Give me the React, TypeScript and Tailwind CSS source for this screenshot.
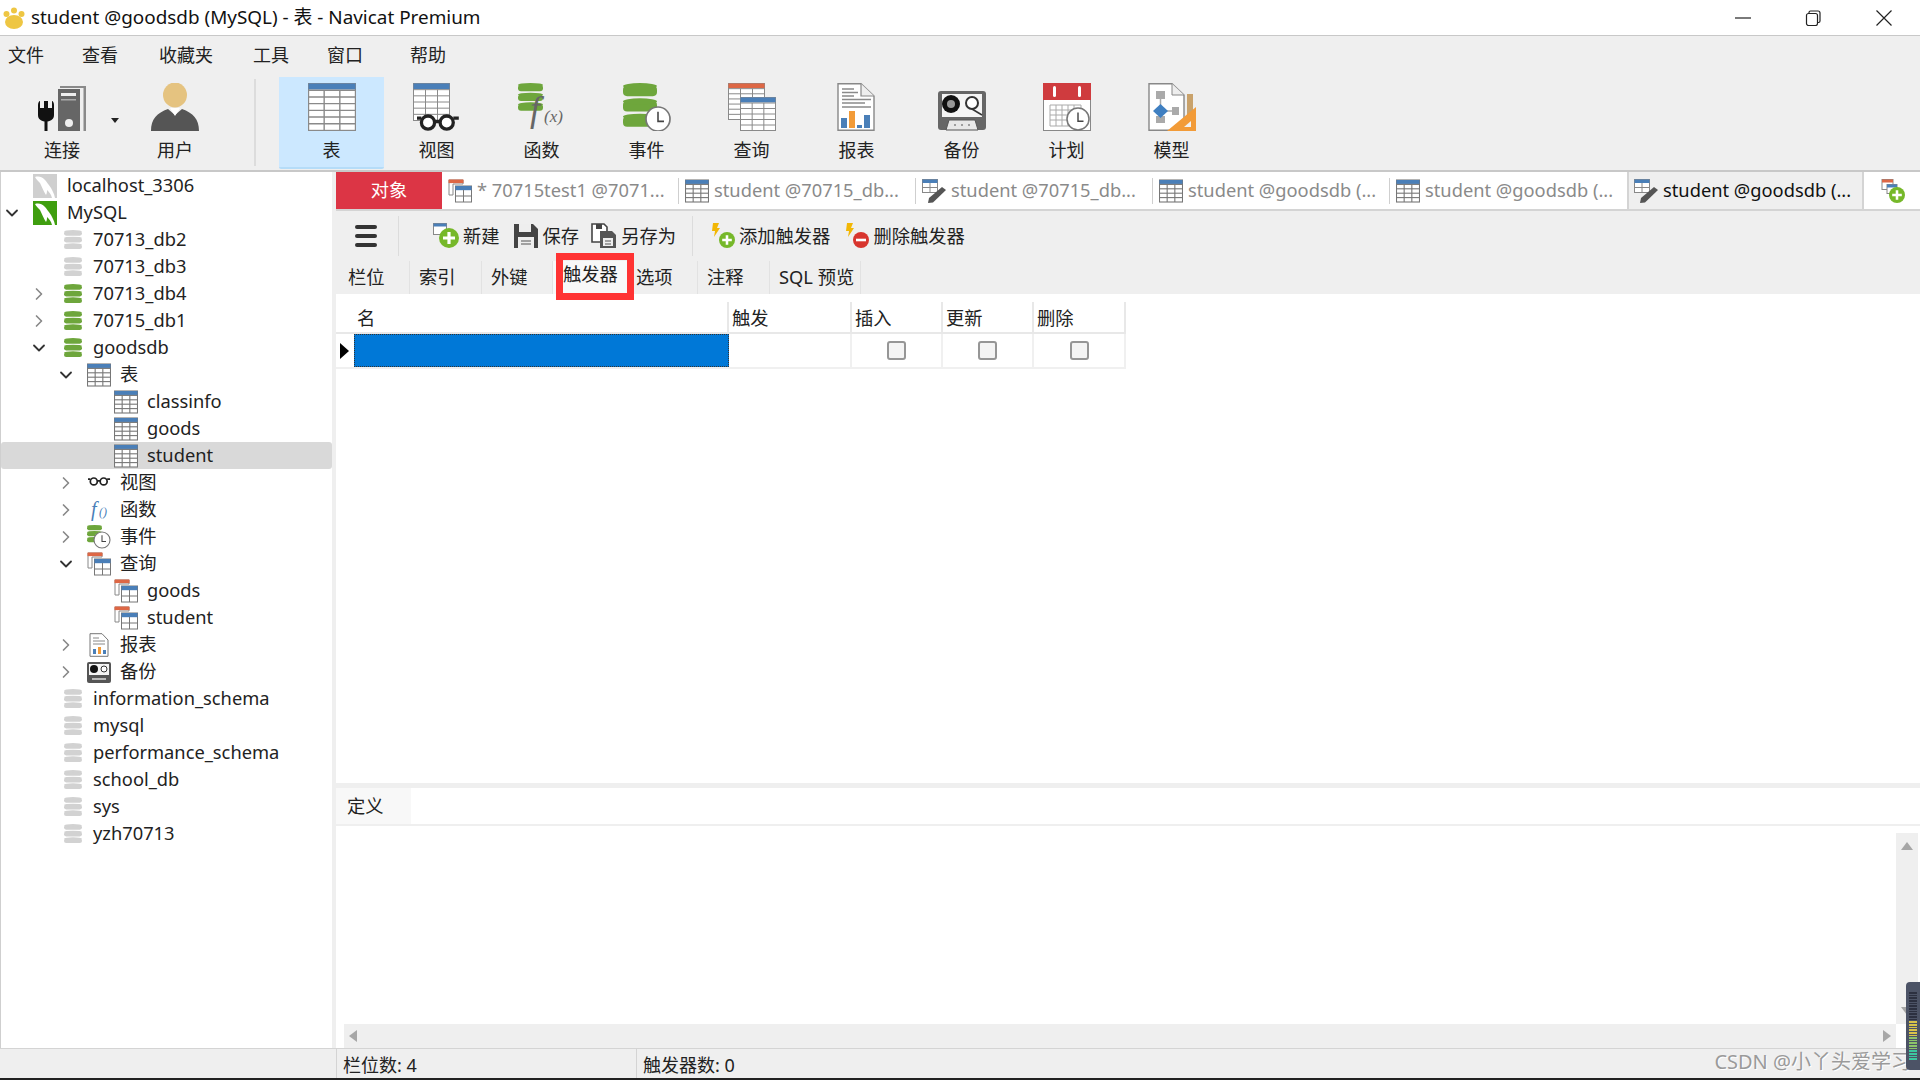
import { ChevronDown, ChevronRight } from "lucide-react";
import type { ReactNode } from "react";

// small drawing helpers ------------------------------------------------------
type GridProps = { x: number; y: number; w: number; h: number; cols: number; rows: number; head?: string; line?: string; sw?: number };

function Grid({ x, y, w, h, cols, rows, head = "#4a7fb8", line = "#8a8a8a", sw = 1 }: GridProps) {
  const rowH = h / (rows + 1);
  const colW = w / cols;
  return (
    <g>
      <rect x={x} y={y} width={w} height={h} fill="#fff" stroke={line} strokeWidth={sw} />
      <rect x={x} y={y} width={w} height={rowH * 0.9} fill={head} />
      {Array.from({ length: rows }).map((_, i) => (
        <line key={i} x1={x} x2={x + w} y1={y + rowH * (i + 1)} y2={y + rowH * (i + 1)} stroke={line} strokeWidth={sw} />
      ))}
      {Array.from({ length: cols - 1 }).map((_, i) => (
        <line key={i} x1={x + colW * (i + 1)} x2={x + colW * (i + 1)} y1={y + rowH} y2={y + h} stroke={line} strokeWidth={sw} />
      ))}
    </g>
  );
}

function DbStack({ x, y, w, h, color }: { x: number; y: number; w: number; h: number; color: string }) {
  const layer = h / 3;
  return (
    <g>
      {[0, 1, 2].map((i) => (
        <g key={i}>
          <rect x={x} y={y + i * layer + layer * 0.18} width={w} height={layer * 0.68} rx={w * 0.12} fill={color} />
          <ellipse cx={x + w / 2} cy={y + i * layer + layer * 0.2} rx={w / 2} ry={layer * 0.2} fill={color} />
        </g>
      ))}
    </g>
  );
}

function Clock({ cx, cy, r }: { cx: number; cy: number; r: number }) {
  return (
    <g>
      <circle cx={cx} cy={cy} r={r} fill="#fff" stroke="#777" strokeWidth={r * 0.14} />
      <path d={`M${cx} ${cy - r * 0.6}V${cy + r * 0.2}H${cx + r * 0.5}`} fill="none" stroke="#444" strokeWidth={r * 0.13} />
    </g>
  );
}

function Glasses({ x, y, s }: { x: number; y: number; s: number }) {
  return (
    <g fill="none" stroke="#222" strokeWidth={3 * s}>
      <circle cx={x + 10 * s} cy={y + 6 * s} r={6 * s} fill="#fff" />
      <circle cx={x + 27 * s} cy={y + 6 * s} r={6 * s} fill="#fff" />
      <path d={`M${x} ${y + 2 * s}H${x + 4 * s}M${x + 16 * s} ${y + 5 * s}H${x + 21 * s}M${x + 33 * s} ${y + 2 * s}H${x + 38 * s}`} />
    </g>
  );
}

function Svg({ size, box = 48, children, className = "" }: { size: number; box?: number; children: ReactNode; className?: string }) {
  return (
    <svg width={size} height={size} viewBox={`0 0 ${box} ${box}`} className={`shrink-0 ${className}`}>
      {children}
    </svg>
  );
}

// toolbar icons (48px) -------------------------------------------------------
const ConnectIcon = (
  <Svg size={48}>
    <path d="M22 3H48V48H45.5V5H22Z" fill="#8a8a8a" />
    <rect x="20" y="6" width="22" height="42" fill="#666" />
    <rect x="23" y="10" width="15" height="3" fill="#eee" />
    <rect x="23" y="16" width="15" height="1.5" fill="#aaa" />
    <circle cx="31" cy="40" r="4" fill="#eee" />
    <path d="M0 22C0 20 1 18 2 18V25H6V18H10V25H14V18C15 18 16 20 16 22V32C16 36 13 38 9.5 38.5V48H6.5V38.5C3 38 0 36 0 32Z" fill="#111" />
  </Svg>
);
const UserIcon = (
  <Svg size={48}>
    <ellipse cx="24" cy="12" rx="12" ry="12.5" fill="#e5c380" />
    <path d="M0 48C0 36 6 30 17 26L24 32L31 26C42 30 48 36 48 48Z" fill="#555" />
    <path d="M19 25H29L24 33Z" fill="#fff" />
  </Svg>
);
const TableBig = (
  <Svg size={48}>
    <Grid x={0.5} y={0.5} w={47} h={47} cols={3} rows={6} sw={1.4} />
  </Svg>
);
const ViewBig = (
  <Svg size={48}>
    <Grid x={0.5} y={0.5} w={36} h={37} cols={3} rows={5} />
    <Glasses x={4} y={33} s={1.1} />
  </Svg>
);
const FuncBig = (
  <Svg size={48}>
    <DbStack x={0} y={0} w={25} h={29} color="#6ea63c" />
    <text x="12" y="38" fontFamily="Liberation Serif" fontStyle="italic" fontSize="36" fill="#666">f</text>
    <text x="26" y="39" fontFamily="Liberation Serif" fontStyle="italic" fontSize="17" fill="#666">(x)</text>
  </Svg>
);
const EventBig = (
  <Svg size={48}>
    <DbStack x={0} y={0} w={34} h={46} color="#6ea63c" />
    <Clock cx={35} cy={36} r={12} />
  </Svg>
);
const QueryBig = (
  <Svg size={48}>
    <Grid x={0.5} y={0.5} w={36} h={36} cols={3} rows={6} head="#dd6745" />
    <Grid x={12.5} y={14.5} w={35} h={33} cols={3} rows={5} />
  </Svg>
);
const ReportBig = (
  <Svg size={48}>
    <path d="M5 .7H28L41 13V47.3H5Z" fill="#fff" stroke="#888" strokeWidth="1.4" />
    <path d="M28 .7V13H41" fill="#eee" stroke="#888" strokeWidth="1.2" />
    <path d="M9 6H21M9 9.5H25M9 13H21M9 16.5H38M9 20H32M9 24H38" stroke="#8a8a8a" strokeWidth="1.3" />
    <rect x="8" y="35" width="6" height="10" fill="#4a7fb8" />
    <rect x="16" y="28" width="6" height="17" fill="#f29b38" />
    <rect x="24" y="42" width="5" height="3" fill="#4a7fb8" />
    <rect x="31" y="32" width="6" height="13" fill="#4a7fb8" />
  </Svg>
);
const BackupBig = (
  <Svg size={48}>
    <rect x="0" y="8" width="48" height="39" rx="3" fill="#666" />
    <rect x="4" y="11" width="40" height="23" fill="#f4f4f4" />
    <circle cx="13" cy="21" r="9" fill="#111" />
    <circle cx="13" cy="21" r="4" fill="#999" />
    <circle cx="34" cy="20" r="6" fill="#fff" stroke="#333" strokeWidth="2" />
    <path d="M34 26L44 32" stroke="#333" strokeWidth="1.5" />
    <path d="M8 47L11 37H37L40 47Z" fill="#e8e8e8" stroke="#555" />
    <path d="M16 42H18M23 42H25M30 42H32" stroke="#555" />
  </Svg>
);
const PlanBig = (
  <Svg size={48}>
    <rect x="0.5" y="0.5" width="47" height="47" fill="#fff" stroke="#888" />
    <rect x="0" y="0" width="48" height="17" fill="#cf3b3e" />
    <rect x="10" y="3" width="3" height="11" fill="#fff" rx="1.5" />
    <rect x="35" y="3" width="3" height="11" fill="#fff" rx="1.5" />
    <path d="M7 22H38V43H7ZM7 27H38M7 32H38M7 37H38M13 22V43M19 22V43M25 22V43M31 22V43" fill="none" stroke="#aaa" />
    <Clock cx={35} cy={36} r={11} />
  </Svg>
);
const ModelBig = (
  <Svg size={48}>
    <path d="M1 .7H24L36 12V47.3H1Z" fill="#fff" stroke="#888" strokeWidth="1.4" />
    <path d="M24 .7V12H36" fill="#eee" stroke="#888" />
    <rect x="8" y="8" width="9" height="8" fill="#aaa" />
    <rect x="8" y="33" width="9" height="7" fill="#aaa" />
    <rect x="24" y="24" width="7" height="8" fill="#aaa" />
    <path d="M12.5 16V33M17 28H24" stroke="#aaa" strokeWidth="1.5" />
    <path d="M12.5 21L20 28L12.5 35L5 28Z" fill="#3f7fc1" />
    <rect x="39" y="11" width="6" height="26" fill="#c9a26b" />
    <path d="M48 24V48H19Z" fill="#f29b38" />
    <path d="M43 38V44H36Z" fill="#f1f1f1" />
  </Svg>
);

// tree and tab icons (24px) --------------------------------------------------
const TableSmall = (
  <Svg size={24} box={24}>
    <Grid x={0.5} y={1} w={23} h={22} cols={3} rows={4} sw={1.1} line="#777" />
  </Svg>
);
const QuerySmall = (
  <Svg size={24} box={24}>
    <path d="M1 1H15V5H5V16H1Z" fill="#fff" stroke="#888" />
    <rect x="0.5" y="0.5" width="15" height="3.6" fill="#dd6745" />
    <rect x="7.5" y="7" width="16" height="16" fill="#fff" stroke="#777" />
    <rect x="7.5" y="7" width="16" height="4.2" fill="#4a7fb8" />
    <path d="M7.5 17H23.5M15.5 11V23" stroke="#777" />
  </Svg>
);
const DesignSmall = (
  <Svg size={24} box={24}>
    <rect x="0.5" y="0.5" width="15" height="13" fill="#fff" stroke="#888" />
    <rect x="0.5" y="0.5" width="15" height="3.5" fill="#4a7fb8" />
    <path d="M0.5 8.5H15.5M8 4V13.5" stroke="#888" />
    <path d="M20 8L24 11L11 23.5L6 24L7 19Z" fill="#555" />
  </Svg>
);
const DbIcon = ({ on = false }: { on?: boolean }) => (
  <Svg size={20} box={20}>
    <DbStack x={1} y={0} w={18} h={20} color={on ? "#6ea63c" : "#d2d2d2"} />
  </Svg>
);
const Dolphin = ({ bg }: { bg: string }) => (
  <Svg size={24} box={24}>
    <rect width="24" height="24" fill={bg} />
    <path d="M2 3C6 2 9 3 11 5C14 8 15 10 18 14C19 16 21 19 22 24H19C18 20 16 18 14 16C14 18 14 19 13 21C11 18 9 13 7 9C5 7 3 5 2 3Z" fill="#fff" />
  </Svg>
);
const ViewSmall = (
  <Svg size={24} box={24}>
    <Glasses x={1} y={7} s={0.58} />
  </Svg>
);
const FuncSmall = (
  <Svg size={24} box={24}>
    <text x="4" y="18" fontFamily="Liberation Serif" fontStyle="italic" fontSize="20" fill="#4a7fb8">f</text>
    <text x="12" y="18" fontFamily="Liberation Serif" fontStyle="italic" fontSize="12" fill="#4a7fb8">()</text>
  </Svg>
);
const EventSmall = (
  <Svg size={24} box={24}>
    <DbStack x={0} y={0} w={15} h={18} color="#6ea63c" />
    <Clock cx={15} cy={15} r={8} />
  </Svg>
);
const ReportSmall = (
  <Svg size={24} box={24}>
    <path d="M3 .7H15L21 7V23.3H3Z" fill="#fff" stroke="#777" />
    <path d="M6 5H12M6 8H18M6 11H18" stroke="#888" />
    <rect x="6" y="16" width="3" height="5" fill="#4a7fb8" />
    <rect x="11" y="14" width="3" height="7" fill="#f29b38" />
    <rect x="16" y="17" width="3" height="4" fill="#4a7fb8" />
  </Svg>
);
const BackupSmall = (
  <Svg size={24} box={24}>
    <rect x="0" y="2" width="24" height="21" rx="2" fill="#555" />
    <rect x="2" y="4" width="20" height="11" fill="#f4f4f4" />
    <circle cx="7" cy="9" r="4" fill="#111" />
    <circle cx="17" cy="9" r="3" fill="#fff" stroke="#333" />
    <path d="M5 19H19" stroke="#ddd" strokeWidth="1.5" />
  </Svg>
);

const GreenPlus = ({ cx, cy, r }: { cx: number; cy: number; r: number }) => (
  <g>
    <circle cx={cx} cy={cy} r={r} fill="#76b82a" />
    <path d={`M${cx - r * 0.6} ${cy}H${cx + r * 0.6}M${cx} ${cy - r * 0.6}V${cy + r * 0.6}`} stroke="#fff" strokeWidth={r * 0.32} />
  </g>
);
const Bolt = (
  <path d="M3 0H9L7 5H10L4 14L5 8H2Z" fill="#f2b705" />
);

const NewIcon = (
  <Svg size={26} box={26}>
    <rect x="0.5" y="0.5" width="13" height="11" fill="#fff" stroke="#888" />
    <rect x="0.5" y="0.5" width="13" height="3" fill="#4a7fb8" />
    <GreenPlus cx={16} cy={15} r={10} />
  </Svg>
);
const SaveIcon = (
  <Svg size={26} box={26}>
    <path d="M1 1H20L25 6V25H1Z" fill="#444" />
    <rect x="6" y="1" width="12" height="8" fill="#eee" />
    <rect x="5" y="14" width="16" height="11" fill="#eee" />
    <path d="M8 18H18M8 21H18" stroke="#555" />
  </Svg>
);
const SaveAsIcon = (
  <Svg size={26} box={26}>
    <path d="M1 1H13L16 4V19H1Z" fill="#fff" stroke="#444" strokeWidth="1.6" />
    <rect x="5" y="1" width="6" height="5" fill="#444" />
    <path d="M9 8H21L25 12V25H9Z" fill="#555" />
    <rect x="12" y="15" width="10" height="8" fill="#eee" />
    <path d="M14 18H20M14 21H20" stroke="#555" />
  </Svg>
);
const AddTriggerIcon = (
  <Svg size={26} box={26}>
    {Bolt}
    <GreenPlus cx={17} cy={17} r={8} />
  </Svg>
);
const DelTriggerIcon = (
  <Svg size={26} box={26}>
    {Bolt}
    <circle cx="17" cy="17" r="8" fill="#d8352e" />
    <path d="M12 17H22" stroke="#fff" strokeWidth="2.6" />
  </Svg>
);
const AddTabIcon = (
  <Svg size={24} box={24}>
    <rect x="1" y="0.5" width="11" height="10" fill="#fff" stroke="#888" />
    <rect x="1" y="0.5" width="11" height="3" fill="#dd6745" />
    <rect x="6" y="5.5" width="10" height="9" fill="#fff" stroke="#888" />
    <rect x="6" y="5.5" width="10" height="3" fill="#4a7fb8" />
    <GreenPlus cx={16} cy={16} r={8} />
  </Svg>
);

// data -----------------------------------------------------------------------
const menus = [
  { text: "文件", cls: "ml-[8px]" },
  { text: "查看", cls: "ml-[38px]" },
  { text: "收藏夹", cls: "ml-[41px]" },
  { text: "工具", cls: "ml-[40px]" },
  { text: "窗口", cls: "ml-[38px]" },
  { text: "帮助", cls: "ml-[47px]" },
];

const tools = [
  { label: "表", icon: TableBig, active: true },
  { label: "视图", icon: ViewBig },
  { label: "函数", icon: FuncBig },
  { label: "事件", icon: EventBig },
  { label: "查询", icon: QueryBig },
  { label: "报表", icon: ReportBig },
  { label: "备份", icon: BackupBig },
  { label: "计划", icon: PlanBig },
  { label: "模型", icon: ModelBig },
];

const docTabs = [
  { text: "* 70715test1 @7071...", icon: QuerySmall },
  { text: "student @70715_db...", icon: TableSmall },
  { text: "student @70715_db...", icon: DesignSmall },
  { text: "student @goodsdb (...", icon: TableSmall },
  { text: "student @goodsdb (...", icon: TableSmall },
];

type Row = { text: string; level: number; icon: ReactNode; open?: boolean; closed?: boolean; selected?: boolean };

const tree: Row[] = [
  { text: "localhost_3306", level: 0, icon: <Dolphin bg="#cfcfcf" /> },
  { text: "MySQL", level: 0, icon: <Dolphin bg="#3f9e0f" />, open: true },
  { text: "70713_db2", level: 1, icon: <DbIcon /> },
  { text: "70713_db3", level: 1, icon: <DbIcon /> },
  { text: "70713_db4", level: 1, icon: <DbIcon on />, closed: true },
  { text: "70715_db1", level: 1, icon: <DbIcon on />, closed: true },
  { text: "goodsdb", level: 1, icon: <DbIcon on />, open: true },
  { text: "表", level: 2, icon: TableSmall, open: true },
  { text: "classinfo", level: 3, icon: TableSmall },
  { text: "goods", level: 3, icon: TableSmall },
  { text: "student", level: 3, icon: TableSmall, selected: true },
  { text: "视图", level: 2, icon: ViewSmall, closed: true },
  { text: "函数", level: 2, icon: FuncSmall, closed: true },
  { text: "事件", level: 2, icon: EventSmall, closed: true },
  { text: "查询", level: 2, icon: QuerySmall, open: true },
  { text: "goods", level: 3, icon: QuerySmall },
  { text: "student", level: 3, icon: QuerySmall },
  { text: "报表", level: 2, icon: ReportSmall, closed: true },
  { text: "备份", level: 2, icon: BackupSmall, closed: true },
  { text: "information_schema", level: 1, icon: <DbIcon /> },
  { text: "mysql", level: 1, icon: <DbIcon /> },
  { text: "performance_schema", level: 1, icon: <DbIcon /> },
  { text: "school_db", level: 1, icon: <DbIcon /> },
  { text: "sys", level: 1, icon: <DbIcon /> },
  { text: "yzh70713", level: 1, icon: <DbIcon /> },
];

const levelPad = ["pl-0", "pl-[27px]", "pl-[54px]", "pl-[81px]"];
const iconBoxes = ["w-[44px] pl-[10px]", "w-[43px] pl-[13px]", "w-[43px] pl-[10px]", "w-[43px] pl-[10px]"];

const subTabs = [
  { text: "栏位", cls: "w-[71px]" },
  { text: "索引", cls: "w-[72px]" },
  { text: "外键", cls: "w-[71px]" },
  { text: "触发器", cls: "w-[74px]", active: true },
  { text: "选项", cls: "w-[71px]" },
  { text: "注释", cls: "w-[72px]" },
  { text: "SQL 预览", cls: "w-[91px]" },
];

function TreeRow({ row }: { row: Row }) {
  return (
    <div className={`flex h-[27px] items-center rounded-[3px] ${levelPad[row.level]} ${row.selected ? "bg-[#d9d9d9]" : ""}`}>
      <span className="flex w-[22px] shrink-0 items-center justify-center">
        {row.open && <ChevronDown size={20} strokeWidth={2.2} className="text-[#333]" />}
        {row.closed && <ChevronRight size={20} strokeWidth={2} className="text-[#888]" />}
      </span>
      <span className={`flex shrink-0 items-center ${iconBoxes[row.level]}`}>{row.icon}</span>
      <span className="whitespace-nowrap">{row.text}</span>
    </div>
  );
}

function Check() {
  return (
    <div className="flex h-full items-center justify-center border-r-2 border-[#f0f0f0]">
      <span className="h-[19px] w-[19px] rounded-[3px] border-2 border-[#969696] bg-[#f4f4f4]" />
    </div>
  );
}

function HeadCell({ text }: { text: string }) {
  return <div className="flex h-full items-center border-r-2 border-[#e8e8e8] pl-[3px] pt-[2px]">{text}</div>;
}

export default function App() {
  return (
    <div className="relative flex h-[1080px] w-[1920px] flex-col overflow-hidden bg-[#efefef] font-['Noto_Sans','Noto_Sans_CJK_SC',sans-serif] text-[18.3px] leading-none text-[#222]">
      {/* title bar */}
      <div className="flex h-[36px] shrink-0 items-center border-b border-[#c8c8c8] bg-white pl-[3px]">
        <Svg size={22} box={22}>
          <ellipse cx="11" cy="15" rx="9" ry="7" fill="#eec643" />
          <circle cx="3.5" cy="7" r="3" fill="#eec643" />
          <circle cx="11" cy="3.5" r="3" fill="#eec643" />
          <circle cx="18.5" cy="7" r="3" fill="#eec643" />
        </Svg>
        <span className="ml-[6px] text-[18.9px] text-[#111]">student @goodsdb (MySQL) - 表 - Navicat Premium</span>
        <div className="ml-auto flex items-center">
          <svg width="16" height="16" viewBox="0 0 16 16"><path d="M0 8H16" stroke="#222" strokeWidth="1.2" /></svg>
          <svg width="16" height="16" viewBox="0 0 16 16" className="ml-[54px]"><path d="M4 3V2.5Q4 1 5.5 1H13Q15 1 15 3V11Q15 12.5 13.5 12.5H13" fill="none" stroke="#222" strokeWidth="1.2" /><rect x="1.5" y="3.5" width="11" height="12" rx="2" fill="none" stroke="#222" strokeWidth="1.2" /></svg>
          <svg width="16" height="16" viewBox="0 0 16 16" className="ml-[55px] mr-[28px]"><path d="M.5.5L15.5 15.5M15.5.5L.5 15.5" stroke="#222" strokeWidth="1.2" /></svg>
        </div>
      </div>

      {/* menu */}
      <div className="flex h-[36px] shrink-0 items-center pt-[2px] text-[18px]">
        {menus.map((m) => (
          <span key={m.text} className={m.cls}>{m.text}</span>
        ))}
      </div>

      {/* main toolbar */}
      <div className="flex h-[100px] shrink-0 border-b-2 border-[#c8c8c8] pb-[1px] pt-[5px] text-[18px]">
        <div className="relative flex w-[124px] flex-col items-center pt-[6px]">
          {ConnectIcon}
          <span className="mt-[10px]">连接</span>
          <span className="absolute left-[111px] top-[41px] h-0 w-0 border-x-[4px] border-t-[5px] border-x-transparent border-t-[#222]" />
        </div>
        <div className="flex w-[102px] flex-col items-center pt-[6px]">
          {UserIcon}
          <span className="mt-[10px]">用户</span>
        </div>
        <div className="ml-[28px] mr-[23px] mt-[2px] h-[87px] w-[2px] bg-[#dcdcdc]" />
        {tools.map((t) => (
          <div
            key={t.label}
            className={`flex w-[105px] flex-col items-center pt-[6px] ${t.active ? "rounded-b-[2px] border-b-2 border-[#b5dcf8] bg-[#cce8ff]" : ""}`}
          >
            {t.icon}
            <span className="mt-[10px]">{t.label}</span>
          </div>
        ))}
      </div>

      {/* body */}
      <div className="flex min-h-0 flex-1">
        {/* tree */}
        <div className="w-[332px] shrink-0 border-l border-[#cfcfcf] bg-white">
          {tree.map((row, i) => (
            <TreeRow key={i} row={row} />
          ))}
        </div>

        {/* right side */}
        <div className="ml-[4px] flex min-w-0 flex-1 flex-col">
          {/* document tabs */}
          <div className="flex h-[39px] shrink-0 border-b-2 border-[#d4d4d4] bg-white">
            <div className="flex w-[106px] items-center justify-center bg-[#dc3545] text-white">对象</div>
            {docTabs.map((t, i) => (
              <div key={i} className="flex w-[237px] items-center pl-[6px] text-[#8a8a8a]">
                {t.icon}
                <span className="ml-[5px] whitespace-nowrap">{t.text}</span>
                <span className={`ml-auto h-[26px] w-px ${i < 4 ? "bg-[#cfcfcf]" : ""}`} />
              </div>
            ))}
            <div className="flex w-[237px] items-center border-x-2 border-[#d4d4d4] bg-[#efefef] pl-[5px] text-[#111]">
              {DesignSmall}
              <span className="ml-[5px] whitespace-nowrap">student @goodsdb (...</span>
            </div>
            <div className="ml-[2px] flex flex-1 items-center pl-[15px]">{AddTabIcon}</div>
          </div>

          {/* object toolbar */}
          <div className="flex h-[50px] shrink-0 items-center">
            <div className="ml-[19px] flex w-[22px] flex-col gap-[5px]">
              <span className="h-[4px] rounded-[2px] bg-[#333]" />
              <span className="h-[4px] rounded-[2px] bg-[#333]" />
              <span className="h-[4px] rounded-[2px] bg-[#333]" />
            </div>
            <span className="ml-[21px] h-[40px] w-px bg-[#dcdcdc]" />
            <span className="ml-[34px] flex items-center gap-[4px]">{NewIcon}新建</span>
            <span className="ml-[13px] flex items-center gap-[4px]">{SaveIcon}保存</span>
            <span className="ml-[12px] flex items-center gap-[4px]">{SaveAsIcon}另存为</span>
            <span className="ml-[16px] h-[40px] w-px bg-[#dcdcdc]" />
            <span className="ml-[17px] flex items-center gap-[3px]">{AddTriggerIcon}添加触发器</span>
            <span className="ml-[14px] flex items-center gap-[3px]">{DelTriggerIcon}删除触发器</span>
          </div>

          {/* object tabs */}
          <div className="flex h-[33px] shrink-0 pl-[3px]">
            {subTabs.map((t) =>
              t.active ? (
                <div key={t.text} className={`relative flex items-center bg-[#f8f8f8] pb-[6px] pl-[10px] ${t.cls}`}>
                  {t.text}
                  <span className="absolute -top-[8px] bottom-[-6px] left-[3px] right-[-7px] border-[7px] border-[#ff3333]" />
                </div>
              ) : (
                <div key={t.text} className={`flex items-center border-r border-[#e2e2e2] pl-[9px] ${t.cls}`}>
                  {t.text}
                </div>
              ),
            )}
          </div>

          {/* trigger grid */}
          <div className="min-h-0 flex-1 bg-white pt-[8px]">
            <div className="grid w-[790px] grid-cols-[18px_375px_123px_91px_91px_92px] grid-rows-[32px_33px]">
              <div className="border-b-2 border-[#e8e8e8]" />
              {["名", "触发", "插入", "更新", "删除"].map((h) => (
                <div key={h} className="border-b-2 border-[#e8e8e8]">
                  <HeadCell text={h} />
                </div>
              ))}
              <div className="flex items-center pl-[4px]">
                <span className="h-0 w-0 border-y-[8px] border-l-[9px] border-y-transparent border-l-black" />
              </div>
              <div className="border border-dotted border-[#333] bg-[#0078d7]" />
              <div className="border-r-2 border-[#f0f0f0]" />
              <Check />
              <Check />
              <Check />
              <div className="col-span-6 h-[2px] bg-[#f0f0f0]" />
            </div>
          </div>

          {/* definition panel */}
          <div className="h-[5px] shrink-0 bg-[#efefef]" />
          <div className="flex h-[38px] shrink-0 border-b-2 border-[#efefef] bg-white">
            <div className="flex w-[75px] items-center bg-[#f8f8f8] pl-[11px]">定义</div>
          </div>
          <div className="flex h-[222px] shrink-0 flex-col bg-white">
            <div className="flex min-h-0 flex-1">
              <div className="flex-1" />
              <div className="mr-[2px] mt-[7px] flex w-[22px] flex-col items-center justify-between bg-[#efefef] py-[9px]">
                <span className="h-0 w-0 border-x-[6px] border-b-[8px] border-x-transparent border-b-[#a6a6a6]" />
                <span className="h-0 w-0 border-x-[6px] border-t-[8px] border-x-transparent border-t-[#a6a6a6]" />
              </div>
            </div>
            <div className="ml-[8px] mr-[24px] flex h-[24px] shrink-0 items-center justify-between bg-[#efefef] px-[5px]">
              <span className="h-0 w-0 border-y-[6px] border-r-[8px] border-y-transparent border-r-[#a6a6a6]" />
              <span className="h-0 w-0 border-y-[6px] border-l-[8px] border-y-transparent border-l-[#a6a6a6]" />
            </div>
          </div>
        </div>
      </div>

      {/* status bar */}
      <div className="flex h-[30px] shrink-0 items-center border-t border-[#d4d4d4] text-[18px]">
        <div className="w-[336px]" />
        <div className="flex h-full w-[300px] items-center border-l border-[#d4d4d4] pl-[6px] pt-[2px]">栏位数: 4</div>
        <div className="flex h-full items-center border-l border-[#d4d4d4] pl-[6px] pt-[2px]">触发器数: 0</div>
      </div>
      <div className="h-[2px] shrink-0 bg-[#222]" />

      {/* CSDN watermark over the window */}
      <div className="absolute right-[9px] top-[1052px] whitespace-nowrap text-[20px] text-[#9a9a9a] [text-shadow:1px_1px_0_#fff]">CSDN @小丫头爱学习</div>
      {/* desktop volume meter poking in from the edge */}
      <div className="absolute left-[1906px] top-[982px] flex h-[88px] w-[14px] flex-col gap-[1px] rounded-l-[4px] bg-[#4c5366] px-[3px] py-[10px]">
        {Array.from({ length: 11 }).map((_, i) => (
          <span key={i} className="h-[2px] bg-[#2c3040]" />
        ))}
        {Array.from({ length: 6 }).map((_, i) => (
          <span key={i} className="h-[2px] bg-[#d8c44a]" />
        ))}
        {Array.from({ length: 5 }).map((_, i) => (
          <span key={i} className="h-[2px] bg-[#8cc36a]" />
        ))}
        {Array.from({ length: 4 }).map((_, i) => (
          <span key={i} className="h-[2px] bg-[#3cc8a0]" />
        ))}
      </div>
    </div>
  );
}
